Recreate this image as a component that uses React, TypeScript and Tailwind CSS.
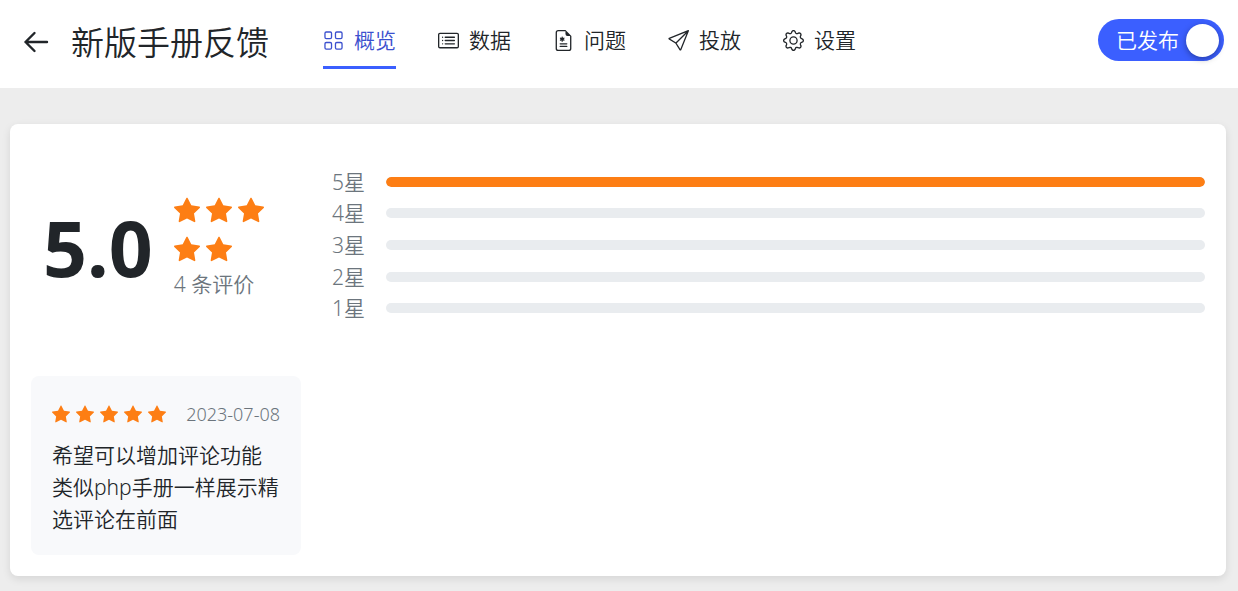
import { useState } from 'react'
import type { IconType } from 'react-icons'
import {
  BsCardList,
  BsFileEarmarkMedical,
  BsGear,
  BsGrid,
  BsSend,
  BsStarFill,
} from 'react-icons/bs'

const tabs: { label: string; icon: IconType }[] = [
  { label: '概览', icon: BsGrid },
  { label: '数据', icon: BsCardList },
  { label: '问题', icon: BsFileEarmarkMedical },
  { label: '投放', icon: BsSend },
  { label: '设置', icon: BsGear },
]

const ratings = [
  { stars: 5, percent: 100 },
  { stars: 4, percent: 0 },
  { stars: 3, percent: 0 },
  { stars: 2, percent: 0 },
  { stars: 1, percent: 0 },
]

function PublishSwitch() {
  const [published, setPublished] = useState(true)
  return (
    <label className="flex h-[42px] w-[126px] cursor-pointer items-center justify-between rounded-full bg-[#3b5fff] pr-[5px] pl-[18px] text-white">
      <input
        type="checkbox"
        role="switch"
        className="sr-only"
        checked={published}
        onChange={(e) => setPublished(e.target.checked)}
      />
      已发布
      <span className="size-[33px] rounded-full bg-white shadow-[0_2px_6px_rgba(0,0,0,0.35)]" />
    </label>
  )
}

function Header() {
  return (
    <header className="flex h-[88px] items-start bg-white pr-[14px] pl-[22px]">
      <a href="#" aria-label="返回" className="mt-[28px]">
        <svg
          className="size-7"
          viewBox="0 0 28 28"
          fill="none"
          stroke="currentColor"
          strokeWidth={2.4}
          strokeLinecap="round"
          strokeLinejoin="round"
        >
          <path d="M25 14H3.5M12.5 5L3.5 14l9 9" />
        </svg>
      </a>
      <h1 className="mt-[19px] ml-[21px] text-[33px] leading-[48px]">新版手册反馈</h1>
      <nav className="ml-[54px] flex gap-[42px]">
        {tabs.map(({ label, icon: Icon }, i) => (
          <a
            key={label}
            href="#"
            className={
              i === 0
                ? 'flex h-[69px] items-center gap-[10px] border-b-[3px] border-[#3b5fff] pt-[14px] text-[#3b50ce]'
                : 'flex h-[69px] items-center gap-[10px] border-b-[3px] border-transparent pt-[14px]'
            }
          >
            <Icon className="size-[21px]" />
            {label}
          </a>
        ))}
      </nav>
      <div className="mt-[19px] ml-auto">
        <PublishSwitch />
      </div>
    </header>
  )
}

function Summary() {
  return (
    <div className="flex w-[270px] shrink-0 items-center gap-[21px] pr-[21px] pl-[12px]">
      <div className="pt-[6px] text-[77px] leading-[96px] font-bold">5.0</div>
      <div>
        <div className="flex flex-wrap gap-x-[6px] gap-y-[13px] pt-[8px] pb-[5px]">
          {[1, 2, 3, 4, 5].map((n) => (
            <BsStarFill key={n} className="size-[26px] text-[#fd7e14]" />
          ))}
        </div>
        <div className="leading-[34px] text-[#6c757d]">4 条评价</div>
      </div>
    </div>
  )
}

function Distribution() {
  return (
    <ul className="grid h-[158px] flex-1 grid-rows-5">
      {ratings.map(({ stars, percent }) => (
        <li key={stars} className="flex items-center">
          <span className="w-[54px] text-[#6c757d]">{stars}星</span>
          <div className="h-[10px] flex-1 overflow-hidden rounded-full bg-[#e9ecef]">
            <div className="h-full rounded-full bg-[#fd7e14]" style={{ width: `${percent}%` }} />
          </div>
        </li>
      ))}
    </ul>
  )
}

function Review() {
  return (
    <article className="w-[270px] rounded-lg bg-[#f8f9fb] px-[21px] pt-[21px] pb-[20px]">
      <div className="mb-[8px] flex h-[34px] items-center justify-between">
        <div className="flex gap-[6px]">
          {[1, 2, 3, 4, 5].map((n) => (
            <BsStarFill key={n} className="size-[18px] text-[#fd7e14]" />
          ))}
        </div>
        <time dateTime="2023-07-08" className="text-[18px] text-[#6c757d]">
          2023-07-08
        </time>
      </div>
      <p className="leading-[32px]">
        希望可以增加评论功能
        <br />
        类似php手册一样展示精选评论在前面
      </p>
    </article>
  )
}

export default function App() {
  return (
    <div className="min-h-screen bg-[#ededed] font-['Noto_Sans','Noto_Sans_CJK_SC',sans-serif] text-[21px] leading-[32px] font-[350] text-[#212529]">
      <Header />
      <main className="pt-[36px] pr-[12px] pb-[15px] pl-[10px]">
        <section className="rounded-lg bg-white p-[21px] shadow-[0_3px_8px_rgba(0,0,0,0.1)]">
          <div className="mb-[31px] flex h-[200px] items-center gap-[31px]">
            <Summary />
            <Distribution />
          </div>
          <Review />
        </section>
      </main>
    </div>
  )
}
